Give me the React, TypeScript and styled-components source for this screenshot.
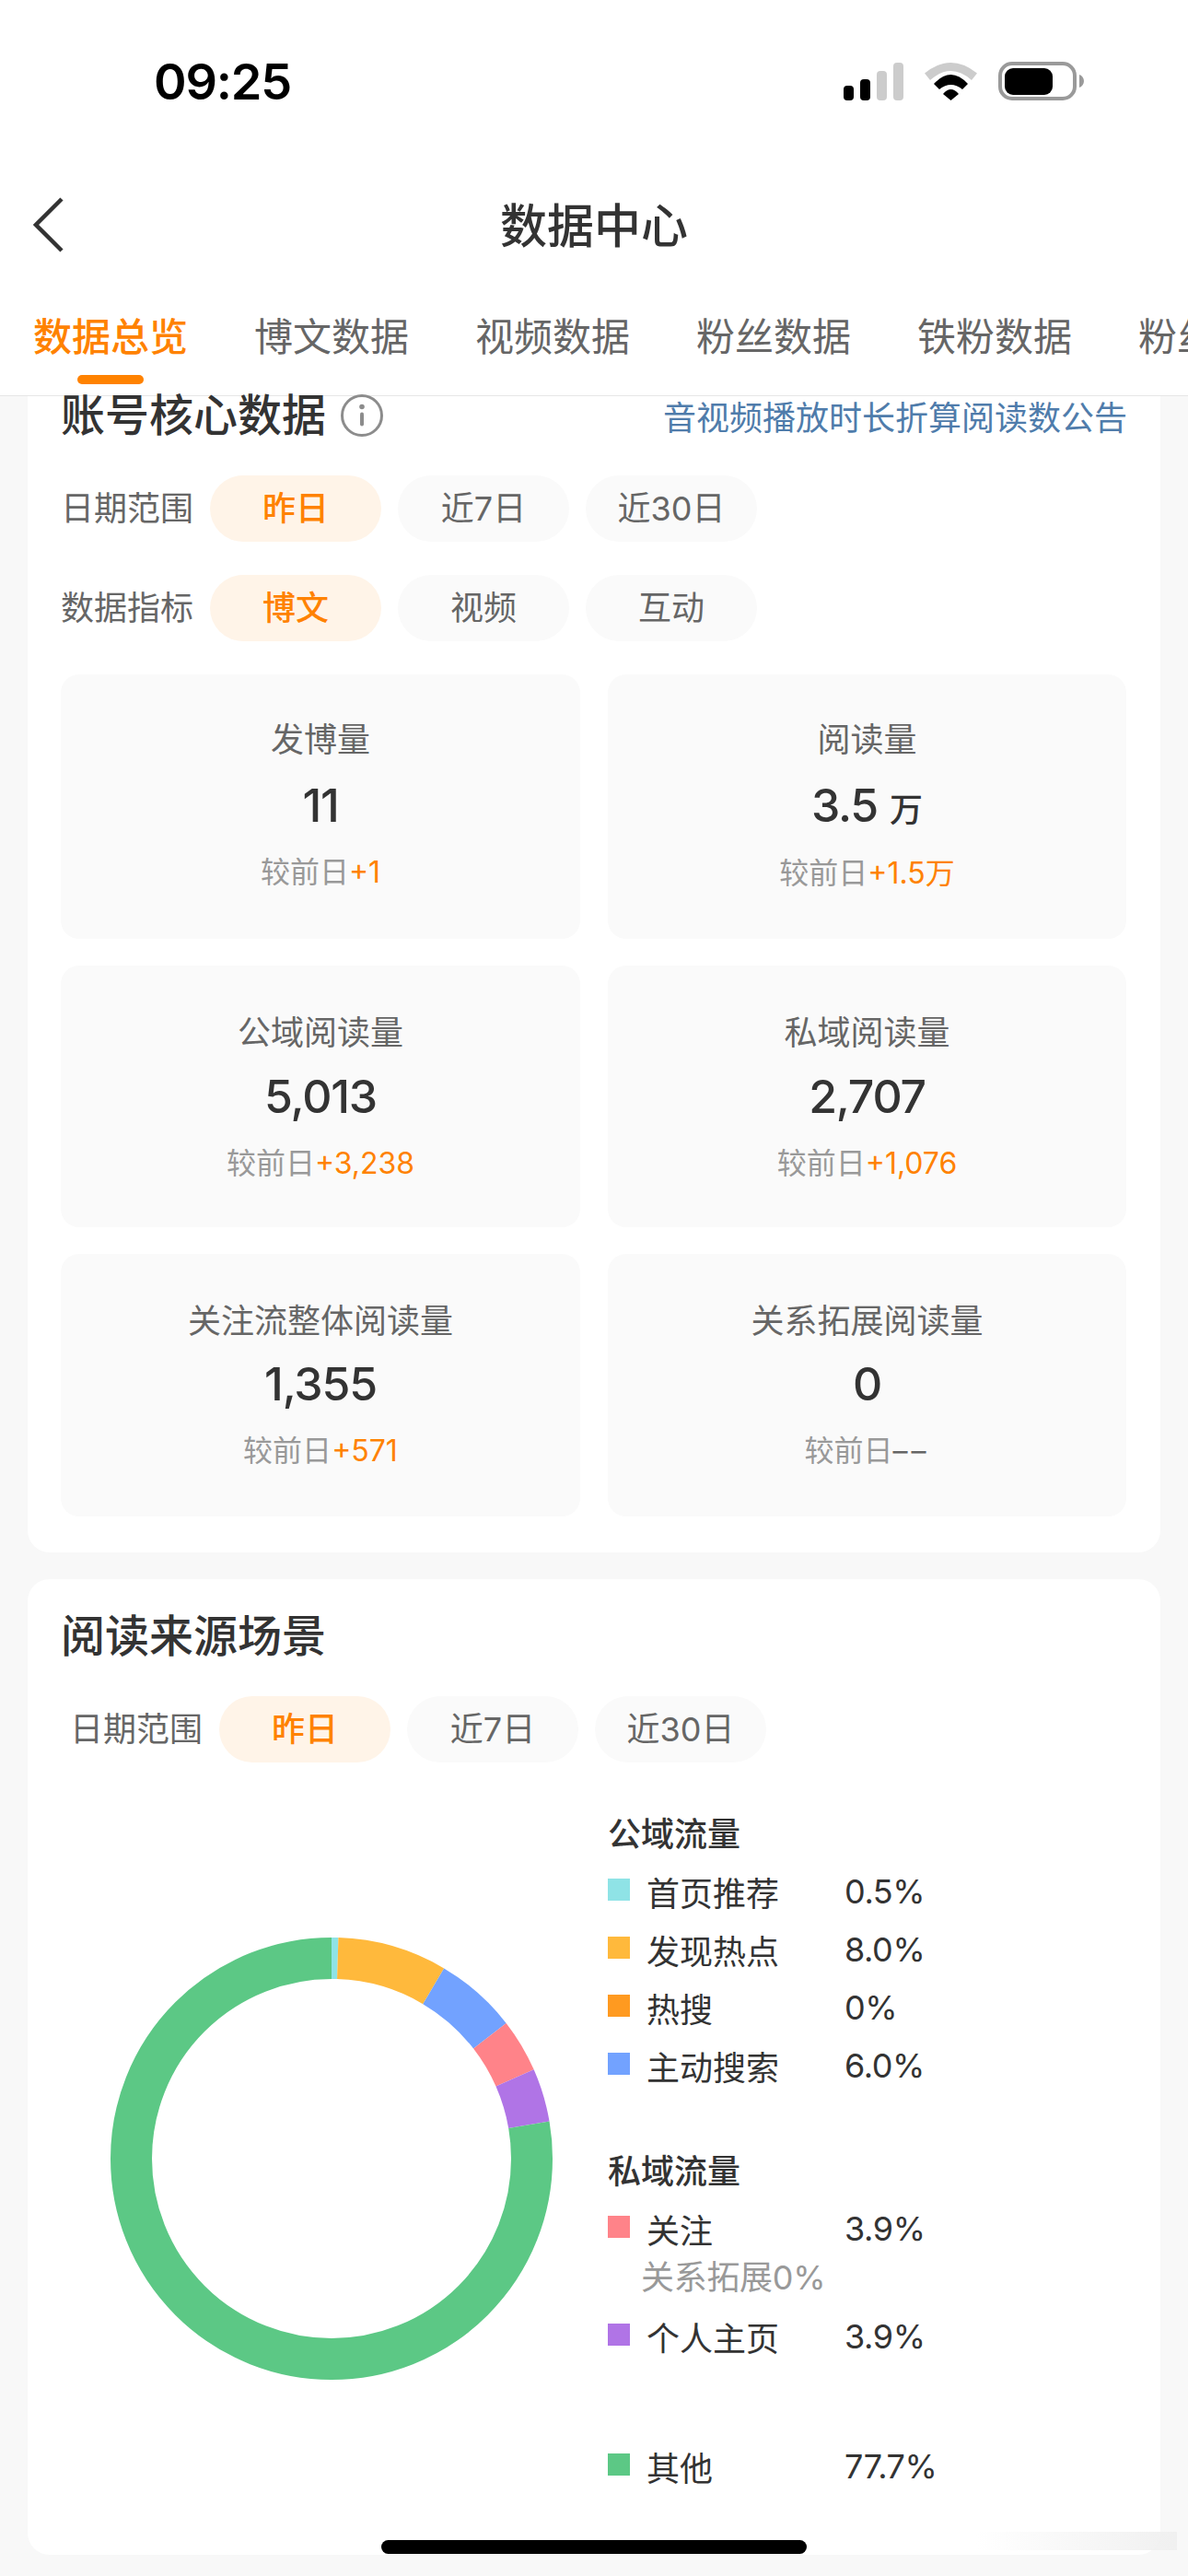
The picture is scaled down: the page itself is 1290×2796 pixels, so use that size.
import styled, { createGlobalStyle } from 'styled-components';

const SANS = `Inter, "Noto Sans CJK SC", sans-serif`;

const GlobalStyle = createGlobalStyle`
  html, body {
    margin: 0;
    padding: 0;
    background: #f8f8f8;
  }
  * {
    box-sizing: border-box;
  }
`;

const tabs = ['数据总览', '博文数据', '视频数据', '粉丝数据', '铁粉数据', '粉丝画像'];

const stats = [
  { label: '发博量', value: '11', delta: '+1' },
  { label: '阅读量', value: '3.5', unit: '万', delta: '+1.5万', low: true },
  { label: '公域阅读量', value: '5,013', delta: '+3,238' },
  { label: '私域阅读量', value: '2,707', delta: '+1,076' },
  { label: '关注流整体阅读量', value: '1,355', delta: '+571' },
  { label: '关系拓展阅读量', value: '0', delta: '––', muted: true },
];

// percent values follow the legend, hot search is 0 so it has no slice
const slices = [
  { color: '#8fe3e6', pct: 0.5 },
  { color: '#ffb93c', pct: 8 },
  { color: '#72a2ff', pct: 6 },
  { color: '#ff8389', pct: 3.9 },
  { color: '#b074e6', pct: 3.9 },
  { color: '#5cc885', pct: 77.7 },
];

function Donut() {
  let used = 0;
  return (
    <DonutSvg viewBox="0 0 480 480">
      {slices.map((s) => {
        const offset = -used;
        used += s.pct;
        return (
          <circle
            key={s.color}
            cx="240"
            cy="240"
            r="217.5"
            fill="none"
            stroke={s.color}
            strokeWidth="45"
            pathLength={100}
            strokeDasharray={`${s.pct} ${100 - s.pct}`}
            strokeDashoffset={offset}
            transform="rotate(-90 240 240)"
          />
        );
      })}
    </DonutSvg>
  );
}

function Filter({ label, items, inset }: { label: string; items: string[]; inset?: boolean }) {
  return (
    <FilterRow $inset={inset}>
      <FilterLabel>{label}</FilterLabel>
      {items.map((item, i) => (
        <Pill key={item} $active={i === 0}>
          {item}
        </Pill>
      ))}
    </FilterRow>
  );
}

function LegendRow({ color, name, value }: { color: string; name: string; value: string }) {
  return (
    <LegendLine>
      <Swatch $color={color} />
      <LegendName>{name}</LegendName>
      <LegendValue>{value}</LegendValue>
    </LegendLine>
  );
}

export default function App() {
  return (
    <Page>
      <GlobalStyle />
      <Header>
        <StatusBar>
          <Clock>09:25</Clock>
          <StatusIcons>
            <svg width="65" height="41" viewBox="0 0 65 41">
              <rect x="0" y="25" width="11" height="16" rx="4" fill="#000" />
              <rect x="18" y="18" width="11" height="23" rx="4" fill="#000" />
              <rect x="36" y="9" width="11" height="32" rx="4" fill="#ccc" />
              <rect x="54" y="0" width="11" height="41" rx="4" fill="#ccc" />
            </svg>
            <svg width="57" height="41" viewBox="0 0 57 41">
              <path d="M0 11.5Q28.5-11.5 57 11.5L51 19Q28.5-1 6 19Z" fill="#ccc" />
              <path d="M10 23Q28.5 3 47 23L41 29Q28.5 19 16 29Z" fill="#000" />
              <path d="M20 34Q28.5 24 37 34L28.5 41Z" fill="#000" />
            </svg>
            <svg width="93" height="42" viewBox="0 0 93 42">
              <rect x="2" y="2" width="81" height="38" rx="13" fill="none" stroke="#9a9a9a" strokeWidth="4" />
              <rect x="7" y="7" width="52" height="29" rx="9" fill="#000" />
              <path d="M88 14C91 15 93 18 93 21C93 24 91 27 88 28Z" fill="#9a9a9a" />
            </svg>
          </StatusIcons>
        </StatusBar>
        <NavBar>
          <BackIcon width="34" height="60" viewBox="0 0 34 60">
            <path d="M31 2L3 30L31 58" fill="none" stroke="#333" strokeWidth="4.5" />
          </BackIcon>
          <NavTitle>数据中心</NavTitle>
        </NavBar>
        <TabBar>
          {tabs.map((t, i) => (
            <Tab key={t} $active={i === 0}>
              {t}
            </Tab>
          ))}
        </TabBar>
      </Header>

      <Content>
        <CoreCard>
          <TitleRow>
            <SectionTitle>账号核心数据</SectionTitle>
            <svg width="46" height="46" viewBox="0 0 46 46">
              <circle cx="23" cy="23" r="21.5" fill="none" stroke="#8c8c8c" strokeWidth="3" />
              <circle cx="23" cy="13.5" r="2.8" fill="#8c8c8c" />
              <rect x="21" y="19.5" width="4" height="15" rx="2" fill="#8c8c8c" />
            </svg>
            <NoticeLink>音视频播放时长折算阅读数公告</NoticeLink>
          </TitleRow>
          <Filter label="日期范围" items={['昨日', '近7日', '近30日']} />
          <Filter label="数据指标" items={['博文', '视频', '互动']} />
          <StatGrid>
            {stats.map((s) => (
              <StatCard key={s.label}>
                <StatLabel>{s.label}</StatLabel>
                <StatValue>
                  {s.value}
                  {s.unit && <StatUnit>{s.unit}</StatUnit>}
                </StatValue>
                <StatDelta $low={s.low}>
                  较前日<DeltaNum $muted={s.muted}>{s.delta}</DeltaNum>
                </StatDelta>
              </StatCard>
            ))}
          </StatGrid>
        </CoreCard>

        <SourceCard>
          <SourceTitle>阅读来源场景</SourceTitle>
          <Filter inset label="日期范围" items={['昨日', '近7日', '近30日']} />
          <ChartBody>
            <Donut />
            <Legend>
              <LegendHead>公域流量</LegendHead>
              <LegendRow color="#8fe3e6" name="首页推荐" value="0.5%" />
              <LegendRow color="#ffb93c" name="发现热点" value="8.0%" />
              <LegendRow color="#ff9a20" name="热搜" value="0%" />
              <LegendRow color="#72a2ff" name="主动搜索" value="6.0%" />
              <LegendHead $gap={51}>私域流量</LegendHead>
              <LegendRow color="#ff8389" name="关注" value="3.9%" />
              <LegendNote>关系拓展0%</LegendNote>
              <LegendRow color="#b074e6" name="个人主页" value="3.9%" />
              <LegendOther>
                <LegendRow color="#5cc885" name="其他" value="77.7%" />
              </LegendOther>
            </Legend>
          </ChartBody>
        </SourceCard>
      </Content>
      <HomeBar />
      <CornerSmudge />
    </Page>
  );
}

const Page = styled.div`
  position: relative;
  width: 1290px;
  height: 2796px;
  overflow: hidden;
  background: #f8f8f8;
  font-family: ${SANS};
  color: #333;
`;

const Header = styled.header`
  height: 430px;
  background: #fff;
  border-bottom: 1px solid #e6e6e6;
  overflow: hidden;
`;

const StatusBar = styled.div`
  height: 176px;
  display: flex;
  align-items: center;
  justify-content: space-between;
  padding: 0 113px 0 167px;
`;

const Clock = styled.div`
  font-size: 54px;
  font-weight: 600;
  color: #000;
  letter-spacing: -1.2px;
`;

const StatusIcons = styled.div`
  display: flex;
  align-items: flex-end;
  gap: 23px;
`;

const NavBar = styled.div`
  position: relative;
  height: 136px;
  display: flex;
  align-items: center;
  justify-content: center;
  padding-bottom: 4px;
`;

const BackIcon = styled.svg`
  position: absolute;
  left: 36px;
  top: 38px;
`;

const NavTitle = styled.h1`
  margin: 0;
  font-size: 51px;
  font-weight: 500;
  color: #333;
`;

const TabBar = styled.div`
  display: flex;
  gap: 72px;
  padding: 30px 0 0 36px;
  white-space: nowrap;
`;

const Tab = styled.div<{ $active?: boolean }>`
  position: relative;
  flex: none;
  font-size: 42px;
  line-height: 48px;
  font-weight: ${(p) => (p.$active ? 500 : 400)};
  color: ${(p) => (p.$active ? '#ff8200' : '#666')};

  &::after {
    content: '';
    display: ${(p) => (p.$active ? 'block' : 'none')};
    position: absolute;
    left: 48px;
    bottom: -27px;
    width: 72px;
    height: 10px;
    border-radius: 5px;
    background: #ff8200;
  }
`;

const Content = styled.main`
  display: flex;
  flex-direction: column;
  gap: 29px;
  padding: 0 30px;
`;

const CoreCard = styled.section`
  display: flex;
  flex-direction: column;
  gap: 36px;
  padding: 0 36px 39px;
  background: #fff;
  border-radius: 0 0 24px 24px;
`;

const TitleRow = styled.div`
  display: flex;
  align-items: center;
  gap: 16px;
  height: 46px;
  margin-top: -2px;
  margin-bottom: 6px;
`;

const SectionTitle = styled.h2`
  margin: 0;
  font-size: 48px;
  line-height: 48px;
  font-weight: 500;
  color: #333;
`;

const NoticeLink = styled.a`
  margin-left: auto;
  font-size: 36px;
  color: #4f7cab;
`;

const FilterRow = styled.div<{ $inset?: boolean }>`
  display: flex;
  align-items: center;
  gap: 18px;
  padding-left: ${(p) => (p.$inset ? 10 : 0)}px;
`;

const FilterLabel = styled.span`
  width: 144px;
  padding-bottom: 6px;
  font-size: 36px;
  color: #666;
`;

const Pill = styled.span<{ $active?: boolean }>`
  width: 186px;
  height: 72px;
  padding-bottom: 6px;
  border-radius: 36px;
  display: flex;
  align-items: center;
  justify-content: center;
  font-size: 36px;
  font-weight: ${(p) => (p.$active ? 500 : 400)};
  color: ${(p) => (p.$active ? '#ff8200' : '#666')};
  background: ${(p) => (p.$active ? '#fff4e8' : '#fafafa')};
`;

const StatGrid = styled.div`
  display: grid;
  grid-template-columns: 564px 563px;
  grid-template-rows: 287px 284px 285px;
  gap: 29px 30px;
`;

const StatValue = styled.div`
  display: flex;
  align-items: baseline;
  margin-top: 21px;
  font-size: 50px;
  line-height: 50px;
  font-weight: 500;
  letter-spacing: -1.2px;
  color: #333;
`;

const StatCard = styled.div`
  display: flex;
  flex-direction: column;
  align-items: center;
  padding-top: 46px;
  background: #fafafa;
  border-radius: 20px;

  &:nth-child(n + 3) {
    padding-top: 48px;
  }

  &:nth-child(n + 3) ${StatValue} {
    margin-top: 19px;
  }

  &:nth-child(n + 5) ${StatValue} {
    margin-top: 18px;
  }
`;

const StatLabel = styled.div`
  font-size: 36px;
  line-height: 50px;
  color: #666;
`;

const StatUnit = styled.span`
  margin-left: 13px;
  font-size: 36px;
  letter-spacing: 0;
`;

const StatDelta = styled.div<{ $low?: boolean }>`
  margin-top: ${(p) => (p.$low ? 19 : 23)}px;
  font-size: 32px;
  line-height: 50px;
  color: #999;
`;

const DeltaNum = styled.span<{ $muted?: boolean }>`
  letter-spacing: ${(p) => (p.$muted ? '4px' : '0')};
  color: ${(p) => (p.$muted ? '#666' : '#ff8200')};
`;

const SourceCard = styled.section`
  height: 1059px;
  padding: 38px 36px 0;
  background: #fff;
  border-radius: 24px;
`;

const SourceTitle = styled.h2`
  margin: 0 0 41px;
  font-size: 48px;
  line-height: 48px;
  font-weight: 500;
  color: #333;
`;

const ChartBody = styled.div`
  display: flex;
  align-items: flex-start;
  margin-top: 45px;
  padding-left: 54px;
  gap: 60px;
`;

const DonutSvg = styled.svg`
  flex: none;
  width: 480px;
  height: 480px;
  margin-top: 145px;
`;

const Legend = styled.div`
  flex: 1;
`;

const LegendHead = styled.div<{ $gap?: number }>`
  margin-top: ${(p) => p.$gap ?? 0}px;
  padding-top: 4px;
  font-size: 36px;
  line-height: 59px;
  font-weight: 500;
  color: #333;
`;

const LegendLine = styled.div`
  display: grid;
  grid-template-columns: 24px 197px auto;
  column-gap: 18px;
  align-items: center;
  height: 63px;
`;

const Swatch = styled.span<{ $color: string }>`
  width: 24px;
  height: 24px;
  margin-top: -4px;
  background: ${(p) => p.$color};
`;

const LegendName = styled.span`
  font-size: 36px;
  color: #333;
`;

const LegendValue = styled.span`
  font-size: 36px;
  letter-spacing: -0.4px;
  color: #333;
`;

const LegendNote = styled.div`
  height: 54px;
  padding-left: 36px;
  font-size: 36px;
  line-height: 45px;
  letter-spacing: -0.3px;
  color: #999;
`;

const LegendOther = styled.div`
  margin-top: 78px;
`;

const HomeBar = styled.div`
  position: absolute;
  left: 414px;
  bottom: 24px;
  width: 462px;
  height: 15px;
  border-radius: 8px;
  background: #000;
`;

// faint blur left in the corner of the original capture
const CornerSmudge = styled.div`
  position: absolute;
  left: 1060px;
  top: 2748px;
  width: 218px;
  height: 20px;
  background: linear-gradient(to right, rgba(240, 240, 240, 0), #f0f0f0);
`;
